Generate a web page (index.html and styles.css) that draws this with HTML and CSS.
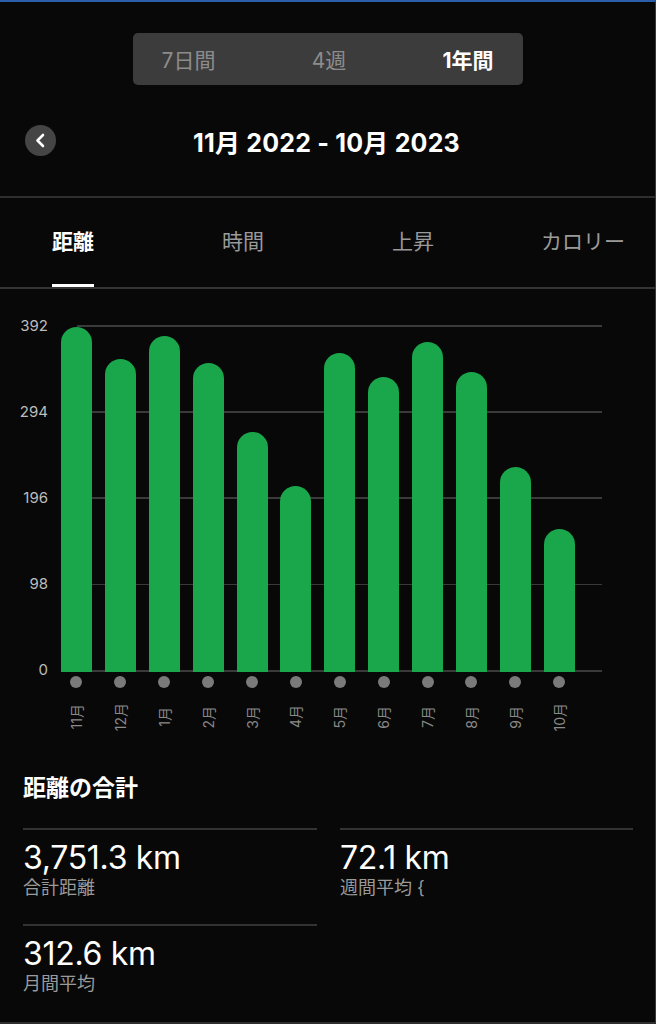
FILE: index.html
```html
<!DOCTYPE html>
<html lang="ja">
<head>
<meta charset="utf-8">
<title>距離</title>
<link rel="stylesheet" href="styles.css">
</head>
<body>
<div class="page">
  <div class="segmented">
    <span class="seg">7日間</span>
    <span class="seg">4週</span>
    <span class="seg active">1年間</span>
  </div>

  <div class="titlebar">
    <span class="back">
      <svg width="31" height="31" viewBox="0 0 31 31"><polyline points="18,10 12.5,15.5 18,21" fill="none" stroke="#fff" stroke-width="2.6" stroke-linecap="round" stroke-linejoin="round"/></svg>
    </span>
    <h1 class="title">11月 2022 - 10月 2023</h1>
  </div>

  <nav class="tabs">
    <div class="tab active"><span>距離</span></div>
    <div class="tab"><span>時間</span></div>
    <div class="tab"><span>上昇</span></div>
    <div class="tab"><span>カロリー</span></div>
  </nav>

  <section class="chart">
    <div class="yaxis">
      <span>392</span><span>294</span><span>196</span><span>98</span><span>0</span>
    </div>
    <div class="plotwrap">
      <div class="plot">
        <div class="bar" style="height:345px"></div>
        <div class="bar" style="height:313px"></div>
        <div class="bar" style="height:336px"></div>
        <div class="bar" style="height:309px"></div>
        <div class="bar" style="height:240px"></div>
        <div class="bar" style="height:186px"></div>
        <div class="bar" style="height:319px"></div>
        <div class="bar" style="height:295px"></div>
        <div class="bar" style="height:330px"></div>
        <div class="bar" style="height:300px"></div>
        <div class="bar" style="height:205px"></div>
        <div class="bar" style="height:143px"></div>
      </div>
      <div class="dots">
        <i></i><i></i><i></i><i></i><i></i><i></i><i></i><i></i><i></i><i></i><i></i><i></i>
      </div>
      <div class="months">
        <span>11月</span><span>12月</span><span>1月</span><span>2月</span><span>3月</span><span>4月</span>
        <span>5月</span><span>6月</span><span>7月</span><span>8月</span><span>9月</span><span>10月</span>
      </div>
    </div>
  </section>

  <section class="summary">
    <h2 class="summary-title">距離の合計</h2>
    <div class="stats">
      <div class="stat">
        <div class="value">3,751.3 km</div>
        <div class="label">合計距離</div>
      </div>
      <div class="stat">
        <div class="value">72.1 km</div>
        <div class="label">週間平均 {</div>
      </div>
      <div class="stat">
        <div class="value">312.6 km</div>
        <div class="label">月間平均</div>
      </div>
    </div>
  </section>
</div>
</body>
</html>
```

FILE: styles.css
```css
* { box-sizing: border-box; }

html, body {
  margin: 0;
  padding: 0;
  background: #080808;
}

.page {
  width: 656px;
  height: 1024px;
  overflow: hidden;
  background: #080808;
  border-top: 2px solid #2a5eaa;
  border-right: 1px solid #3a3a3a;
  border-bottom: 2px solid #2e2e2e;
  font-family: "Inter", "Noto Sans CJK JP", sans-serif;
  color: #fff;
}

/* segmented control */
.segmented {
  margin: 31px auto 0;
  width: 390px;
  height: 52px;
  background: #3c3c3c;
  border-radius: 5px;
  display: flex;
  align-items: center;
  justify-content: space-between;
  padding: 0 29px;
}
.seg {
  font-size: 21px;
  color: #8c8c8c;
}
.seg.active {
  color: #fff;
  font-weight: 700;
}

/* title */
.titlebar {
  margin-top: 40px;
  height: 31px;
  display: flex;
  align-items: center;
  padding-left: 25px;
  margin-bottom: 40px;
}
.back {
  width: 31px;
  height: 31px;
  border-radius: 50%;
  background: #454545;
  display: flex;
}
.title {
  margin: 0 0 0 137px;
  font-size: 25px;
  font-weight: 700;
  letter-spacing: 0.2px;
  white-space: nowrap;
}

/* tabs */
.tabs {
  border-top: 2px solid #2e2e2e;
  border-bottom: 2px solid #333;
  display: grid;
  grid-template-columns: repeat(4, 170px);
  margin-left: -12px;
  padding-top: 30px;
}
.tab {
  display: flex;
  justify-content: center;
}
.tab span {
  font-size: 21px;
  line-height: 28px;
  padding-bottom: 28px;
  border-bottom: 3px solid transparent;
  color: #9a9a9a;
  white-space: nowrap;
}
.tab.active span {
  color: #fff;
  font-weight: 700;
  border-bottom-color: #fff;
}

/* chart */
.chart {
  display: flex;
  padding-top: 36px;
}
.yaxis {
  width: 48px;
  height: 360px;
  margin-top: -7px;
  display: flex;
  flex-direction: column;
  justify-content: space-between;
  align-items: flex-end;
}
.yaxis span {
  font-size: 15px;
  line-height: 16px;
  color: #bdbdbd;
}
.plotwrap {
  margin-left: 6.5px;
  width: 547.5px;
}
.plot {
  position: relative;
  height: 347px;
  display: grid;
  grid-template-columns: repeat(12, 43.9px);
  justify-items: center;
  align-items: end;
}
.plot::before {
  content: "";
  position: absolute;
  left: 22.5px;
  right: 0;
  top: 0;
  bottom: 0;
  background: repeating-linear-gradient(to bottom, #3a3a3a 0, #3a3a3a 1.6px, transparent 1.6px, transparent 86.25px);
}
.bar {
  position: relative;
  width: 31px;
  background: #1aa64a;
  border-radius: 15.5px 15.5px 0 0;
}
.dots {
  margin-top: 4px;
  display: grid;
  grid-template-columns: repeat(12, 43.9px);
  justify-items: center;
}
.dots i {
  width: 12px;
  height: 12px;
  border-radius: 50%;
  background: #7a7a7a;
}
.months {
  margin-top: 9px;
  height: 40px;
  display: grid;
  grid-template-columns: repeat(12, 43.9px);
  justify-items: center;
  align-items: center;
}
.months span {
  writing-mode: vertical-rl;
  text-orientation: sideways;
  transform: rotate(180deg);
  font-size: 14px;
  line-height: 15px;
  color: #8a8a8a;
  white-space: nowrap;
}

/* summary */
.summary {
  margin-top: 36px;
  padding-left: 23px;
}
.summary-title {
  margin: 0 0 25px;
  font-size: 23px;
  line-height: 30px;
  font-weight: 700;
}
.stats {
  display: grid;
  grid-template-columns: 294px 293px;
  column-gap: 23px;
  row-gap: 24px;
}
.stat {
  border-top: 2px solid #333;
  padding-top: 10px;
}
.value {
  font-size: 32px;
  line-height: 36px;
  letter-spacing: -0.3px;
  white-space: nowrap;
}
.label {
  font-size: 18px;
  line-height: 24px;
  color: #9a9a9a;
  white-space: nowrap;
}
```
